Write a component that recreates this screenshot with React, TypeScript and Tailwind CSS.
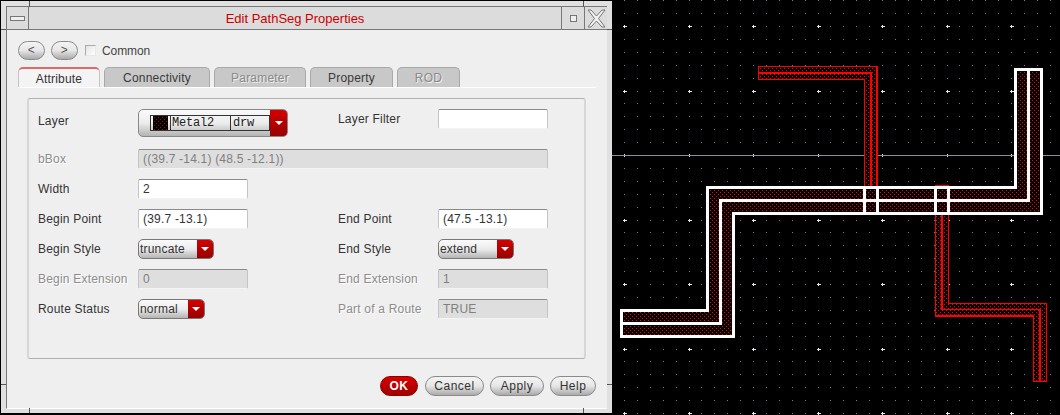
import React from "react";

const sans = "font-['Liberation_Sans',Arial,sans-serif] text-[12px] tracking-[0.2px]";

function Label({ children, disabled }: { children: React.ReactNode; disabled?: boolean }) {
  return (
    <div
      className={`h-5 leading-5 ${disabled ? "text-[#8c8c8c] [text-shadow:1px_1px_0_#fff]" : "text-[#333]"}`}
    >
      {children}
    </div>
  );
}

function Field({ value, disabled, className = "w-[110px]" }: { value?: string; disabled?: boolean; className?: string }) {
  return (
    <div
      className={`h-5 leading-[18px] pl-1 rounded-[2px] border border-t-[#8a8a8a] border-x-[#c4c4c4] border-b-[#f4f4f4] ${
        disabled ? "bg-[#dedede] text-[#808080]" : "bg-white text-[#333]"
      } ${className}`}
    >
      {value}
    </div>
  );
}

function Arrow() {
  return <div className="w-0 h-0 border-x-[4px] border-x-transparent border-t-[4px] border-t-white" />;
}

function Combo({ value, className }: { value: string; className: string }) {
  return (
    <div className={`h-5 flex rounded-[5px] overflow-hidden border border-[#777] bg-gradient-to-b from-[#fafafa] via-[#ececec] to-[#b4b4b4] ${className}`}>
      <div className="flex-1 leading-[18px] pl-[1px] text-[#333]">{value}</div>
      <div className="w-4 flex items-center justify-center bg-gradient-to-b from-[#d40000] to-[#980000]">
        <Arrow />
      </div>
    </div>
  );
}

function LayerCombo() {
  return (
    <div className="w-[150px] h-7 flex rounded-[5px] overflow-hidden border border-[#888] bg-gradient-to-b from-[#fafafa] via-[#ececec] to-[#b4b4b4]">
      <div className="ml-[11px] mt-[5px] h-4 w-[121px] flex border border-[#333] font-['Liberation_Mono',monospace] text-[12px] tracking-[-0.2px] leading-[14px] text-[#222]">
        <div className="w-5 shrink-0 border-r border-[#333] flex items-center justify-center">
          <svg width="15" height="14" className="shrink-0">
            <rect width="15" height="14" fill="#000" />
            {[1, 5, 9, 13].map((y) =>
              [1, 5, 9, 13].map((x) => <rect key={`a${x}-${y}`} x={x} y={y} width="1" height="1" fill="#c00000" />)
            )}
            {[3, 7, 11].map((y) =>
              [3, 7, 11].map((x) => <rect key={`b${x}-${y}`} x={x} y={y} width="1" height="1" fill="#c00000" />)
            )}
          </svg>
        </div>
        <div className="w-[60px] shrink-0 border-r border-[#333] pl-[1px]">Metal2</div>
        <div className="flex-1 pl-[2px]">drw</div>
      </div>
      <div className="ml-auto w-[17px] flex items-center justify-center bg-gradient-to-b from-[#d40000] to-[#980000]">
        <Arrow />
      </div>
    </div>
  );
}

function Pill({ children, className }: { children: React.ReactNode; className: string }) {
  return (
    <div
      className={`text-center rounded-full border border-[#8a8a8a] bg-gradient-to-b from-[#f4f4f4] via-[#e6e6e6] to-[#aaaaaa] tracking-[0.5px] ${className}`}
    >
      {children}
    </div>
  );
}

function Tab({ label, width, active, disabled }: { label: string; width: string; active?: boolean; disabled?: boolean }) {
  if (active) {
    return (
      <div className={`h-5 text-center leading-[21px] rounded-t-[5px] border-x border-[#c4c4c4] border-t-2 border-t-[#dc6a6a] bg-[#f4f4f4] text-[#333] ${width}`}>
        {label}
      </div>
    );
  }
  return (
    <div
      className={`h-5 text-center leading-[21px] rounded-t-[5px] border-x border-t border-[#a8a8a8] bg-[#c8c8c8] ${
        disabled ? "text-[#8a8a8a] [text-shadow:1px_1px_0_#eee]" : "text-[#3a3a3a]"
      } ${width}`}
    >
      {label}
    </div>
  );
}

// layout view grid: minor step is a fifth of the major step
const MAJOR = 64.5;
const MINOR = MAJOR / 5;
const X0 = 624;
const Y0 = 26;

function Grid() {
  const items: React.ReactNode[] = [];
  for (let i = 0; i * MINOR + X0 - MINOR < 1060; i++) {
    for (let j = -2; j * MINOR + Y0 < 415; j++) {
      const x = Math.round(X0 - MINOR + i * MINOR);
      const y = Math.round(Y0 + j * MINOR);
      const isMajor = (i - 1) % 5 === 0 && j % 5 === 0 && j >= 0;
      if (isMajor) {
        items.push(
          <path key={`${i}-${j}`} d={`M${x - 1} ${y}h3.5M${x + 0.5} ${y - 1.5}v3.5`} stroke="#e8e8f0" strokeWidth="1" fill="none" />
        );
      } else {
        items.push(<rect key={`${i}-${j}`} x={x} y={y} width="1" height="1" fill="#7c7c9c" />);
      }
    }
  }
  return <g>{items}</g>;
}

const selectedOutline = "M621 310.5H707.5V187.5H1015.5V69.5H1041.5V213.5H733.5V336.5H621Z";
const selectedCenter = "M621 323.5H720.5V200.5H1028.5V69.5";
const upperOutline = "M758.5 66.5H877V213H864.5V79.5H758.5Z";
const upperCenter = "M758.5 73H871V200";
const lowerOutline = "M935.5 186V316H1033.5V381.5H1046.5V303.5H948.5V186Z";
const lowerCenter = "M942 200V309.5H1040V381.5";

function LayoutCanvas() {
  return (
    <svg width="448" height="415" viewBox="612 0 448 415" className="block bg-black" shapeRendering="crispEdges">
      <defs>
        <pattern id="metal" width="4" height="4" patternUnits="userSpaceOnUse">
          <rect width="4" height="4" fill="#000" />
          <rect x="0" y="0" width="1" height="1" fill="#ff0000" />
          <rect x="2" y="2" width="1" height="1" fill="#ff0000" />
        </pattern>
      </defs>
      <Grid />
      <path d="M612 155.5H1060" stroke="#8c8ca0" strokeWidth="1" />
      <path d={upperOutline} fill="url(#metal)" stroke="#ff0000" strokeWidth="1.5" />
      <path d={upperCenter} fill="none" stroke="#ff0000" strokeWidth="1.5" />
      <path d={lowerOutline} fill="url(#metal)" stroke="#ff0000" strokeWidth="1.5" />
      <path d={lowerCenter} fill="none" stroke="#ff0000" strokeWidth="1.5" />
      <path d={selectedOutline} fill="url(#metal)" stroke="none" />
      <path d={selectedOutline} fill="none" stroke="#ffffff" strokeWidth="3" />
      <path d={selectedCenter} fill="none" stroke="#ffffff" strokeWidth="3" />
      <path d="M864.5 187V214M877.5 187V214M935.5 187V214M948.5 187V214" stroke="#ffffff" strokeWidth="3" />
    </svg>
  );
}

function CloseIcon() {
  return (
    <svg width="19" height="19" viewBox="0 0 19 19" fill="none">
      <path d="M1 1H4L9.5 7L15 1H18L11.5 9.5L18 18H15L9.5 12L4 18H1L7.5 9.5Z" stroke="#777" strokeWidth="1" fill="#f0f0f0" />
    </svg>
  );
}

function TitleBar() {
  return (
    <div className="h-[23px] flex bg-[#dcdcdc] border-b border-[#777]">
      <div className="w-[22px] flex items-center justify-center border-r border-[#777]">
        <div className="w-[15px] h-[5px] border border-[#777] bg-[#eee]" />
      </div>
      <div className="flex-1 text-center leading-[24px] text-[#cc0000] text-[13px] tracking-normal">
        Edit PathSeg Properties
      </div>
      <div className="w-[23px] flex items-center justify-center border-l border-[#777]">
        <div className="w-[7px] h-[7px] border border-[#777] bg-[#eee]" />
      </div>
      <div className="w-[23px] flex items-center justify-center border-l border-[#777]">
        <CloseIcon />
      </div>
    </div>
  );
}

function Form() {
  return (
    <div className="grid grid-cols-[100px_200px_100px_110px] grid-rows-[40px_repeat(6,30px)]">
      <div className="pt-[2px]"><Label>Layer</Label></div>
      <LayerCombo />
      <Label>Layer Filter</Label>
      <Field />

      <Label disabled>bBox</Label>
      <div className="col-span-3"><Field disabled value="((39.7 -14.1) (48.5 -12.1))" className="w-[410px]" /></div>

      <Label>Width</Label>
      <div className="col-span-3"><Field value="2" /></div>

      <Label>Begin Point</Label>
      <Field value="(39.7 -13.1)" />
      <Label>End Point</Label>
      <Field value="(47.5 -13.1)" />

      <Label>Begin Style</Label>
      <Combo value="truncate" className="w-[76px]" />
      <Label>End Style</Label>
      <Combo value="extend" className="w-[76px]" />

      <Label disabled>Begin Extension</Label>
      <Field disabled value="0" />
      <Label disabled>End Extension</Label>
      <Field disabled value="1" />

      <Label>Route Status</Label>
      <Combo value="normal" className="w-[67px]" />
      <Label disabled>Part of a Route</Label>
      <Field disabled value="TRUE" />
    </div>
  );
}

// small ticks where the window manager splits its frame into handles
function FrameTicks() {
  return (
    <>
      <div className="absolute left-[28px] top-0 w-px h-[6px] bg-[#555]" />
      <div className="absolute left-[582px] top-0 w-px h-[6px] bg-[#555]" />
      <div className="absolute left-[28px] bottom-0 w-px h-[5px] bg-[#555]" />
      <div className="absolute left-[582px] bottom-0 w-px h-[5px] bg-[#555]" />
      <div className="absolute left-0 top-[28px] h-px w-[5px] bg-[#555]" />
      <div className="absolute right-0 top-[28px] h-px w-[5px] bg-[#555]" />
      <div className="absolute left-0 top-[383px] h-px w-[5px] bg-[#555]" />
      <div className="absolute right-0 top-[383px] h-px w-[5px] bg-[#555]" />
    </>
  );
}

export default function App() {
  return (
    <div className={`w-[1060px] h-[415px] flex overflow-hidden bg-black ${sans}`}>
      <div className="relative w-[612px] h-[415px] shrink-0 border-l border-t border-b-2 border-black bg-[#e0e0e0] px-[5px] pt-[5px] pb-[5px]">
        <FrameTicks />
        <div className="h-[403px] border-l border-t border-b border-l-[#777] border-t-[#777] border-b-white bg-[#efefef]">
          <TitleBar />
          <div className="pl-[11px] pt-[11px] w-[590px]">
            <div className="flex items-center h-[19px]">
              <Pill className="w-[27px] h-[19px] leading-[16px] text-[#555] mr-[6px]">&lt;</Pill>
              <Pill className="w-[27px] h-[19px] leading-[16px] text-[#555] mr-[7px]">&gt;</Pill>
              <div className="w-[11px] h-[11px] border border-t-[#aaa] border-l-[#aaa] border-r-[#e8e8e8] border-b-[#e8e8e8] bg-gradient-to-br from-[#e4e4e4] to-white mr-[6px]" />
              <span className="text-[#444] tracking-[-0.1px]">Common</span>
            </div>
            <div className="flex gap-1 mt-[7px]">
              <Tab label="Attribute" width="w-[82px]" active />
              <Tab label="Connectivity" width="w-[106px]" />
              <Tab label="Parameter" width="w-[92px]" disabled />
              <Tab label="Property" width="w-[83px]" />
              <Tab label="ROD" width="w-[63px]" disabled />
            </div>
            <div className="h-px bg-white w-[578px]" />
            <div className="ml-[9px] mt-[10px] w-[559px] h-[261px] border-t border-b border-t-[#b0b0b0] border-b-[#b0b0b0] border-x-2 border-x-[#d6d6d6] rounded-[3px] pl-[9px] pt-[10px]">
              <Form />
            </div>
            <div className="flex justify-end gap-[6px] mt-[17px] w-[578px]">
              <div className="w-[38px] h-5 leading-[19px] text-center rounded-full bg-gradient-to-b from-[#d80000] to-[#a00000] border border-[#8c0000] text-white font-bold tracking-[0.5px] mr-[1px]">
                OK
              </div>
              <Pill className="w-[59px] h-5 leading-[18px] text-[#333]">Cancel</Pill>
              <Pill className="w-[54px] h-5 leading-[18px] text-[#333]">Apply</Pill>
              <Pill className="w-[46px] h-5 leading-[18px] text-[#333]">Help</Pill>
            </div>
          </div>
        </div>
      </div>
      <LayoutCanvas />
    </div>
  );
}
